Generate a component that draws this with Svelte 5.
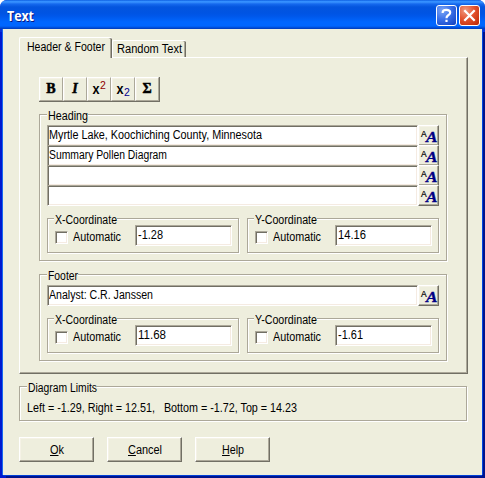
<script lang="ts">
  const headings = [
    { text: 'Myrtle Lake, Koochiching County, Minnesota', width: 213 },
    { text: 'Summary Pollen Diagram', width: 118 },
    { text: '', width: 0 },
    { text: '', width: 0 }
  ];
  const buttons = [
    { key: 'O', rest: 'k', width: 14 },
    { key: 'C', rest: 'ancel', width: 34 },
    { key: 'H', rest: 'elp', width: 22 }
  ];

  // Condense a label horizontally so that it takes exactly the given width.
  function fit(node: HTMLElement, width: number) {
    const natural = node.getBoundingClientRect().width;
    if (!natural || !width) return;
    node.style.width = `${width}px`;
    node.style.transform = `scaleX(${width / natural})`;
  }
</script>

{#snippet label(text: string, width: number)}<span class="slot" style:width="{width}px"><span class="label" use:fit={width}>{text}</span></span>{/snippet}

{#snippet fontButton()}
  <button class="font-button" aria-label="Font">
    <svg width="19" height="19" viewBox="0 0 19 19">
      <text x="2" y="10.500" class="small-a">A</text>
      <text x="7" y="16" class="big-a" textLength="11.5" lengthAdjust="spacingAndGlyphs">A</text>
    </svg>
  </button>
{/snippet}

{#snippet coordinate(axis: string, value: string, width: number)}
  <div class="group coordinate">
    <div class="legend">{@render label(`${axis}-Coordinate`, 62)}</div>
    <span class="check"></span>
    <span class="auto">{@render label('Automatic', 48)}</span>
    <div class="field value">{@render label(value, width)}</div>
  </div>
{/snippet}

<div class="window">
  <header>
    <h1><span class="label" use:fit={27}>Text</span></h1>
    <svg class="caption" width="21" height="21" viewBox="0 0 21 21">
      <defs>
        <radialGradient id="blue" cx=".3" cy=".25" r=".9">
          <stop offset="0" stop-color="#7da6f5" /><stop offset=".5" stop-color="#3a70e8" /><stop offset="1" stop-color="#1646c4" />
        </radialGradient>
        <radialGradient id="red" cx=".3" cy=".25" r=".9">
          <stop offset="0" stop-color="#f09a80" /><stop offset=".5" stop-color="#e3532f" /><stop offset="1" stop-color="#c22c08" />
        </radialGradient>
      </defs>
      <rect x=".5" y=".5" width="20" height="20" rx="2.5" fill="url(#blue)" stroke="#fff" />
      <path d="M6.700 8V7.300Q6.700 4.900 10.400 4.900T14.200 7.500C14.200 9.300 13 9.600 12 10.500Q10.500 11.600 10.500 13.200M10.500 14.800v2.200" fill="none" stroke="#fff" stroke-width="2.2" />
    </svg>
    <svg class="caption close" width="21" height="21" viewBox="0 0 21 21">
      <rect x=".5" y=".5" width="20" height="20" rx="2.5" fill="url(#red)" stroke="#fff" />
      <path d="M5.300 5.300l10.400 10.400M15.700 5.300l-10.400 10.400" stroke="#fff" stroke-width="2.3" />
    </svg>
  </header>

  <main>
    <div class="tabs">
      <div class="tab active">{@render label('Header & Footer', 78)}</div>
      <div class="tab">{@render label('Random Text', 65)}</div>
    </div>

    <section class="pane">
      <div class="toolbar">
        <button><b>B</b></button>
        <button><b><i>I</i></b></button>
        <button><b class="x">x</b><span class="sup">2</span></button>
        <button><b class="x">x</b><span class="sub">2</span></button>
        <button><b class="sigma">Σ</b></button>
      </div>

      <div class="group heading">
        <div class="legend">{@render label('Heading', 40)}</div>
        {#each headings as line}
          <div class="row">
            <div class="field">{@render label(line.text, line.width)}</div>
            {@render fontButton()}
          </div>
        {/each}
        <div class="coordinates">
          {@render coordinate('X', '-1.28', 25)}
          {@render coordinate('Y', '14.16', 28)}
        </div>
      </div>

      <div class="group footer">
        <div class="legend">{@render label('Footer', 30)}</div>
        <div class="row">
          <div class="field">{@render label('Analyst: C.R. Janssen', 104)}</div>
          {@render fontButton()}
        </div>
        <div class="coordinates">
          {@render coordinate('X', '11.68', 28)}
          {@render coordinate('Y', '-1.61', 25)}
        </div>
      </div>
    </section>

    <div class="group limits">
      <div class="legend">{@render label('Diagram Limits', 69)}</div>
      {@render label('Left = -1.29, Right = 12.51,\u00a0\u00a0 Bottom = -1.72, Top = 14.23', 270)}
    </div>

    <div class="actions">
      {#each buttons as b}
        <button><span class="label" use:fit={b.width}><u>{b.key}</u>{b.rest}</span></button>
      {/each}
    </div>
  </main>
</div>

<style>
  :global(body) { background: #fff; }
  .window, .window * { box-sizing: border-box; }
  .window {
    width: 485px;
    height: 478px;
    border-radius: 7px 7px 0 0;
    overflow: hidden;
    background: #0831d9;
    font: 12px/14px "Liberation Sans", Arial, sans-serif;
    color: #000;
  }
  header {
    display: flex;
    height: 29px;
    padding: 5px 5px 0 7px;
    background: linear-gradient(#0753d8 0, #2e8cff 1px, #3a93ff 2px, #1569ee 4px, #0455de 7px, #0054e3 13px, #0057ea 16px, #0066ff 22px, #0066ff 26px, #0048d0 28px, #003ab8 29px);
  }
  h1 {
    align-self: flex-start;
    margin: 2px auto 0 0;
    font: bold 13.5px/18px "Open Sans", "Noto Sans", sans-serif;
    color: #fff;
    text-shadow: 1px 1px 0 #0a1883;
  }
  .caption { display: block; }
  .close { margin-left: 2px; }
  main {
    margin: 0 3px;
    height: 446px;
    padding: 8px 14px 0 16px;
    background: #eeeedd;
    box-shadow: -1px 0 #1668f0, 1px 0 #0046e0, 0 1px #0040d8, 3px 3px #00138c, -3px 3px #0019cf;
  }
  .slot { display: block; height: 14px; }
  .label { display: inline-block; white-space: pre; transform-origin: 0 0; }
  .tabs { display: flex; align-items: flex-end; height: 20px; }
  .tab {
    height: 17px;
    width: 74px;
    padding: 1px 0 0 4px;
    border: solid #fff;
    border-width: 1px 0 0 1px;
    border-radius: 2px 2px 0 0;
    box-shadow: inset -1px 0 #716f64, inset -2px 0 #aca899;
  }
  .tab.active {
    position: relative;
    height: 21px;
    width: 93px;
    margin-bottom: -1px;
    padding: 2px 0 0 7px;
    background: #eeeedd;
  }
  .pane {
    width: 449px;
    height: 317px;
    padding: 19px 0 0 19px;
    border: 1px solid;
    border-color: #fff #716f64 #716f64 #fff;
    box-shadow: inset -1px -1px #aca899;
  }
  button {
    display: flex;
    padding: 0;
    border: 1px solid;
    border-color: #fff #716f64 #716f64 #fff;
    box-shadow: inset -1px -1px #aca899, inset 1px 1px #f5f2e6;
    background: #eeeedd;
    font: inherit;
    color: inherit;
    align-items: center;
    justify-content: center;
  }
  .toolbar { display: flex; width: 121px; height: 25px; border: solid #716f64; border-width: 0 1px 1px 0; }
  .toolbar button {
    width: 24px;
    height: 24px;
    font: 14px/18px "Liberation Serif", serif;
    border-color: #fff #aca899 #aca899 #fff;
    box-shadow: inset 1px 1px #f5f2e6;
  }
  .toolbar b { -webkit-text-stroke: .5px #000; }
  .toolbar .x { font: bold 14px/18px "Liberation Sans", sans-serif; transform: scaleX(.9); margin: -1px 0 0; -webkit-text-stroke: 0; }
  .sup, .sub { font: 10.5px/10px "Liberation Sans", sans-serif; margin: -9px 0 0; color: #900000; }
  .sub { margin: 6px 0 0; color: #000090; }
  .group { position: relative; border: 1px solid #aca899; box-shadow: inset 1px 1px #fff, 1px 1px #fff; }
  .legend { position: absolute; top: -6px; left: 7px; height: 14px; padding-left: 1px; background: #eeeedd; }
  .heading, .footer { width: 408px; padding: 10px 0 0 7px; }
  .heading { height: 147px; margin-top: 12px; }
  .heading > .legend, .footer > .legend { height: 12px; }
  .footer { height: 87px; margin-top: 13px; }
  .row { display: flex; height: 20px; }
  .field {
    position: relative;
    width: 371px;
    height: 21px;
    padding: 2px 0 0 1px;
    background: #fff;
    border: 1px solid;
    border-color: #aca899 #fff #fff #aca899;
    box-shadow: inset 1px 1px #716f64, inset -1px -1px #f5ebe2;
  }
  .font-button { width: 21px; height: 21px; }
  .font-button svg { flex: none; }
  .small-a { font: 8.5px "Liberation Sans", sans-serif; stroke: #000; stroke-width: .2px; }
  .big-a { font: italic bold 14px "Liberation Serif", serif; fill: #000084; stroke: #000084; stroke-width: .3px; }
  .coordinates { display: flex; gap: 8px; margin-top: 13px; }
  .coordinate { display: flex; width: 192px; height: 35px; padding: 6px 0 0 7px; }
  .coordinate .legend { left: 6px; height: 11px; }
  .check {
    width: 13px;
    height: 13px;
    margin-top: 6px;
    background: #fff;
    border: 1px solid;
    border-color: #aca899 #fff #fff #aca899;
    box-shadow: inset 1px 1px #716f64, inset -1px -1px #f5ebe2;
  }
  .auto { width: 62px; margin: 5px 0 0 5px; }
  .value { width: 97px; padding-left: 2px; }
  .limits { width: 448px; height: 35px; margin-top: 12px; padding: 14px 0 0 7px; }
  .actions { display: flex; gap: 13px; margin-top: 16px; }
  .actions button { width: 75px; height: 25px; }
</style>
